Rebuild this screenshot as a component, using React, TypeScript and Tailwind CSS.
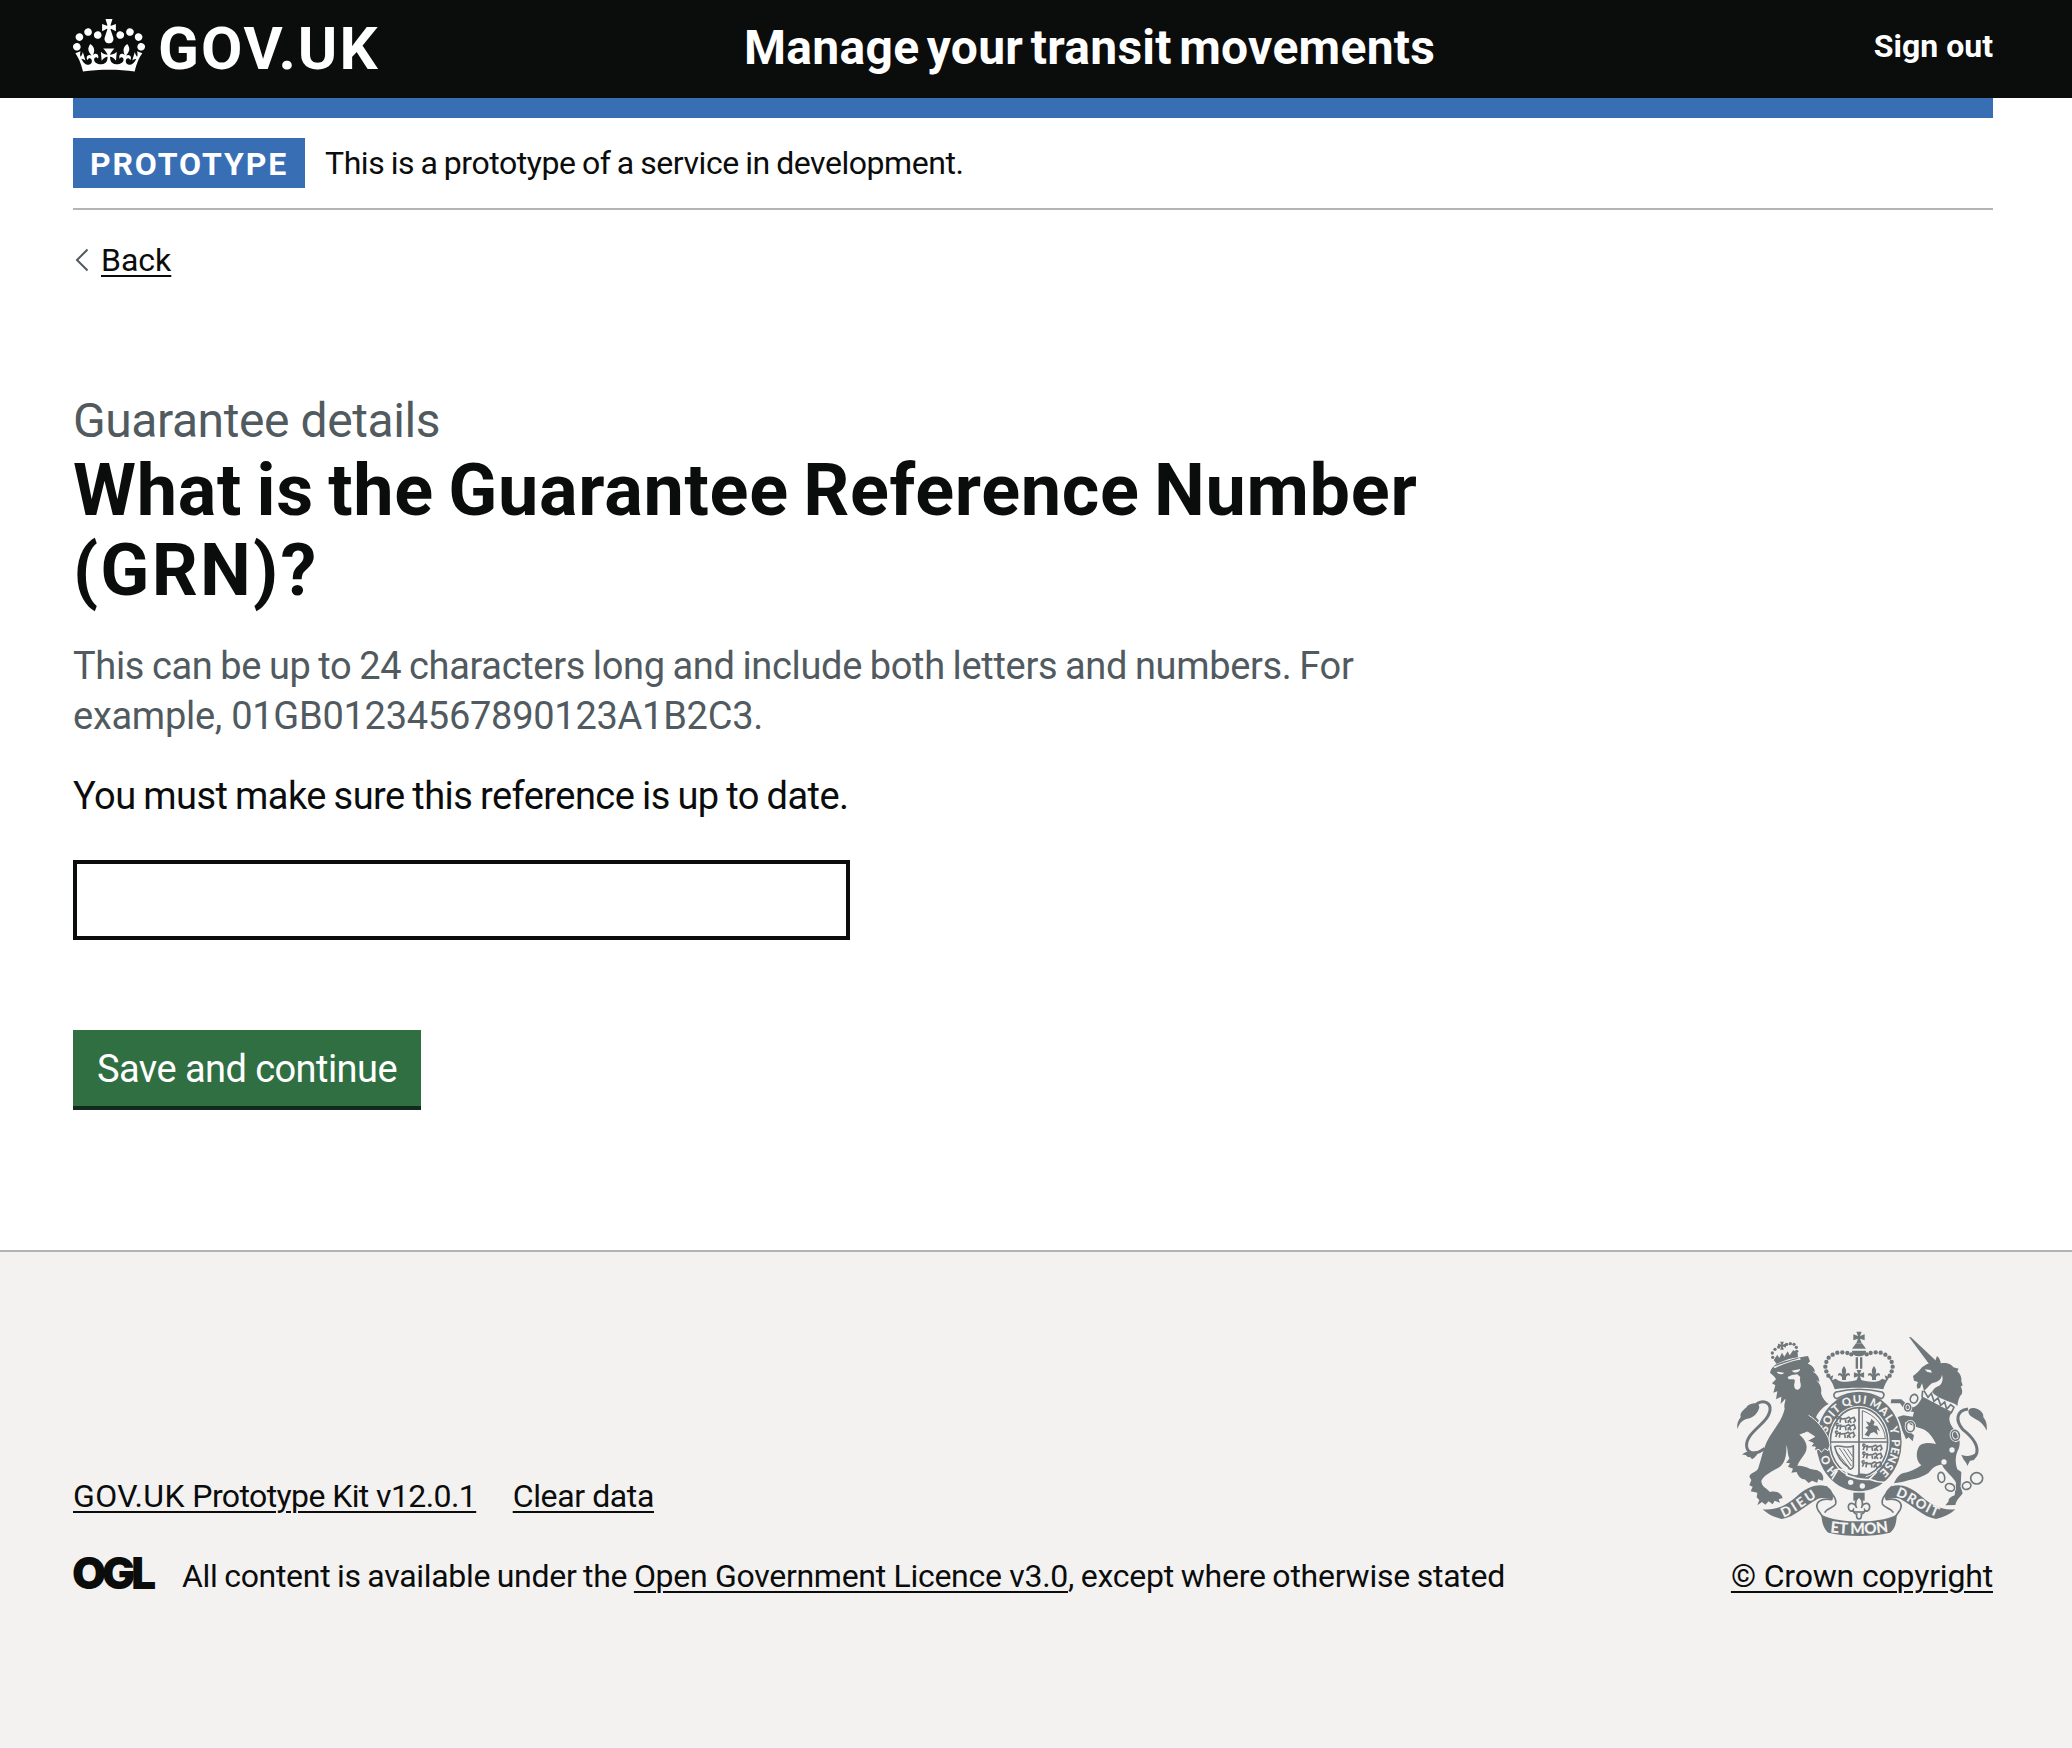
const GARTER_LETTERS: [string, number][] = [
  ["H", -133], ["O", -115],
  ["S", -72], ["O", -59], ["I", -48], ["T", -39],
  ["Q", -20], ["U", -3], ["I", 9],
  ["M", 27], ["A", 43], ["L", 56], ["Y", 74],
  ["P", 91], ["E", 102], ["N", 113], ["S", 125], ["E", 136],
];

const ARCH_PEARLS: [number, number][] = [
  [394, 103], [382, 99], [367, 97], [352, 98], [338, 104], [326, 113], [319, 126], [316, 140], [319, 154], [325, 167],
];

const LION_PEARLS: [number, number][] = [
  [157, 99], [158, 112], [165, 88], [176, 81], [200, 73], [211, 71], [222, 73], [229, 82], [230, 94],
];

const CHAIN_RINGS: [number, number, number, number, number][] = [
  [582, 236, 11, 13, 20], [563, 262, 9, 11, 0], [571, 320, 12, 15, 0], [706, 346, 12, 15, -15],
  [664, 472, 10, 15, -10], [690, 502, 14, 11, 20], [740, 497, 13, 11, -20], [770, 475, 18, 17, 0],
];

function CrownLogo() {
  return (
    <svg className="h-[53px] w-[72px] shrink-0" viewBox="0 0 132 97" fill="currentColor" aria-hidden="true">
      <path
        fillRule="evenodd"
        d="M25 30.2c3.5 1.5 7.7-.2 9.1-3.7 1.5-3.6-.2-7.8-3.9-9.2-3.6-1.4-7.6.3-9.1 3.9-1.4 3.5.3 7.5 3.9 9zM9 39.5c3.6 1.5 7.8-.2 9.2-3.7 1.5-3.6-.2-7.8-3.9-9.1-3.6-1.5-7.6.2-9.1 3.8-1.4 3.5.3 7.5 3.8 9zM4.4 57.2c3.5 1.5 7.7-.2 9.1-3.8 1.5-3.6-.2-7.7-3.9-9.1-3.5-1.5-7.6.3-9.1 3.8-1.4 3.5.3 7.6 3.9 9.1zm38.3-21.4c3.5 1.5 7.7-.2 9.1-3.8 1.5-3.6-.2-7.7-3.9-9.1-3.6-1.5-7.6.3-9.1 3.8-1.3 3.6.4 7.7 3.9 9.1zm64.4-5.6c-3.6 1.5-7.8-.2-9.1-3.7-1.5-3.6.2-7.8 3.8-9.2 3.6-1.4 7.7.3 9.2 3.9 1.3 3.5-.4 7.5-3.9 9zm15.9 9.3c-3.6 1.5-7.7-.2-9.1-3.7-1.5-3.6.2-7.8 3.7-9.1 3.6-1.5 7.7.2 9.2 3.8 1.5 3.5-.3 7.5-3.8 9zm4.7 17.7c-3.6 1.5-7.8-.2-9.2-3.8-1.5-3.6.2-7.7 3.9-9.1 3.6-1.5 7.7.3 9.2 3.8 1.3 3.5-.4 7.6-3.9 9.1zM89.3 35.8c-3.6 1.5-7.8-.2-9.2-3.8-1.4-3.6.2-7.7 3.9-9.1 3.6-1.5 7.7.3 9.2 3.8 1.4 3.6-.3 7.7-3.9 9.1zM69.7 17.7l8.9 4.7V9.3l-8.9 2.8c-.2-.3-.5-.6-.9-.9L72.4 0H59.6l3.5 11.2c-.3.3-.6.5-.9.9l-8.8-2.8v13.1l8.8-4.7c.3.3.6.7.9.9l-5 15.4v.1c-.2.8-.4 1.6-.4 2.4 0 4.1 3.1 7.5 7 8.1h.2c.3 0 .7.1 1 .1.4 0 .7 0 1-.1h.2c4-.6 7.1-4.1 7.1-8.1 0-.8-.1-1.7-.4-2.4V34l-5.1-15.4c.4-.2.7-.6 1-.9zM66 92.8c16.9 0 32.8 1.1 47.1 3.2 4-16.9 8.9-26.7 14-33.5l-9.6-3.4c1 4.9 1.1 7.2 0 10.2-1.5-1.4-3-4.3-4.2-8.7L108.6 76c2.8-2 5-3.2 7.5-3.3-4.4 9.4-10 11.9-13.6 11.2-4.3-.8-6.3-4.6-5.6-7.9 1-4.7 5.7-5.9 8-.5 4.3-8.7-3-11.4-7.6-8.8 7.1-7.2 7.9-13.5 2.1-21.1-8 6.1-8.1 12.3-4.5 20.8-4.7-5.4-12.1-2.5-9.5 6.2 3.4-5.2 7.9-2 7.2 3.1-.6 4.3-6.4 7.8-13.5 7.2-10.3-.9-10.9-8-11.2-13.8 2.5-.5 7.1 1.8 11 7.3L80.2 60c-4.1 4.4-8 5.3-12.3 5.4 1.4-4.4 8-11.6 8-11.6H55.5s6.4 7.2 7.9 11.6c-4.2-.1-8-1-12.3-5.4l1.4 16.4c3.9-5.5 8.5-7.7 10.9-7.3-.3 5.8-.9 12.8-11.1 13.8-7.2.6-12.9-2.9-13.5-7.2-.7-5 3.8-8.3 7.1-3.1 2.7-8.7-4.6-11.6-9.4-6.2 3.7-8.5 3.6-14.7-4.6-20.8-5.8 7.6-5 13.9 2.2 21.1-4.7-2.6-11.9.1-7.7 8.8 2.3-5.5 7.1-4.2 8.1.5.7 3.3-1.3 7.1-5.7 7.9-3.5.7-9-1.8-13.5-11.2 2.5.1 4.7 1.3 7.5 3.3l-4.7-15.4c-1.2 4.4-2.7 7.2-4.3 8.7-1.1-3-.9-5.3 0-10.2l-9.5 3.4c5 6.9 9.9 16.7 14 33.5 14.8-2.1 30.8-3.2 47.7-3.2z"
      />
    </svg>
  );
}

function Fleur({ x, y, s = 1 }: { x: number; y: number; s?: number }) {
  return (
    <path
      transform={`translate(${x} ${y}) scale(${s})`}
      d="M0-22C8-12 8-4 3 6C8-4 20-3 18 8C14 4 9 6 6 12L6 20H-6L-6 12C-9 6-14 4-18 8C-20-3-8-4-3 6C-8-4-8-12 0-22Z"
    />
  );
}

function Cross({ x, y, s = 1 }: { x: number; y: number; s?: number }) {
  return (
    <path
      transform={`translate(${x} ${y}) scale(${s})`}
      d="M-8-17H8L3-4L17-9V9L3 4L8 17H-8L-3 4L-17 9V-9L-3-4Z"
    />
  );
}

function WalkingLion({ x, y }: { x: number; y: number }) {
  return (
    <path
      transform={`translate(${x} ${y})`}
      fill="none"
      stroke="#6f777b"
      strokeWidth="5"
      d="M-33 6L-28-5L-20-6L-22 8M-20-3L-4-4L4-8L10-4L6 2L12 9M-6-2L-4 9M4 0L2 9M10-4L20-8L24 2L18 8M-31-4C-38-12-28-14-27-9"
    />
  );
}

function Scroll() {
  return (
    <>
      <path d="M128 568C175 572 205 552 238 522C265 499 296 491 318 499C336 507 341 522 338 540C318 532 298 533 288 540C262 552 224 592 186 597C164 592 146 585 128 568Z" />
      <path
        fill="none"
        stroke="#6f777b"
        strokeWidth="5"
        d="M336 539C302 532 284 548 293 568C298 578 306 584 312 598M318 499C334 522 352 534 347 552C342 564 322 562 314 578"
      />
    </>
  );
}

function RoyalArms() {
  return (
    <svg className="h-[208px] w-[252px]" viewBox="48 30 756 624" fill="#6f777b" role="img" aria-label="Royal coat of arms">
      {/* lion */}
      <path d="M166 134C190 124 235 112 264 108L270 124L263 131C276 135 284 144 285 156L277 154C291 163 298 172 298 186L289 180C302 194 306 206 303 220C308 236 316 246 326 252C306 262 294 278 288 292C306 312 322 336 328 360L324 392L312 386L305 397L297 388L284 392L287 380L274 381L280 370L268 362L286 350L263 334C258 336 248 340 238 344C256 358 266 378 256 398C246 414 236 424 232 438C252 434 268 450 290 450C306 456 314 470 308 482L294 478L292 488L276 482L266 489L254 478C242 478 234 468 230 456L214 458L219 446L204 440L210 430L198 428L208 416C202 402 204 388 199 374C200 400 198 426 178 442C156 454 132 466 124 482C124 500 140 504 150 516C168 512 184 518 188 534L176 538L180 548L164 542L158 553L146 544L136 554L126 546L112 556L118 540L110 532L112 518L92 514L98 500L88 496L94 480L88 470C92 456 108 458 114 446C124 418 128 392 140 366C158 330 186 304 194 266C190 254 198 244 196 236L182 252L184 230L168 238L172 214L160 218L166 196L156 190L168 178C166 170 158 166 150 158C152 148 158 140 166 134Z" />
      <path fill="none" stroke="#6f777b" strokeWidth="9" d="M134 385C110 404 84 404 80 380C76 350 112 326 132 304C152 282 158 256 138 247C124 242 110 250 100 262" />
      <path d="M52 328C50 312 54 302 62 292C58 274 74 270 82 258C96 246 118 246 118 262C114 280 100 294 82 296C68 300 58 308 52 328Z" />
      <path d="M66 404C76 396 84 392 96 396L118 392C112 404 106 412 96 418C92 412 90 410 84 412C80 404 74 404 66 404Z" />
      <g fill="#f3f2f1">
        <path d="M170 155L192 158C188 165 176 165 170 155Z" />
        <path d="M215 152L241 147C238 158 224 162 215 152Z" />
        <path d="M203 171L216 165L232 163L241 172C237 182 244 190 242 200C238 212 225 212 223 200C221 190 228 184 222 178L206 178Z" />
        <path d="M160 140C190 130 232 116 240 114L242 119C220 121 186 133 164 145Z" />
      </g>
      {/* lion's crown */}
      {LION_PEARLS.map(([x, y]) => (
        <circle key={`${x}-${y}`} cx={x} cy={y} r="5" />
      ))}
      <Cross x={186} y={77} s={0.7} />
      <path d="M161 120L172 104L178 114L186 98L193 110L203 94L209 106L220 90L233 100L234 112C214 114 190 122 170 132Z" />

      {/* unicorn */}
      <path d="M567 51L573 52L648 122L630 136Z" />
      <path d="M634 128L646 122L651 108C658 114 662 122 662 130C680 126 696 134 700 142L716 146L712 154C722 162 726 176 724 184L728 196L722 200C730 212 726 224 722 226C716 234 714 246 712 258C706 250 698 250 690 246C674 240 650 232 636 216C640 206 650 200 660 196C668 186 670 176 666 164C664 180 652 186 640 188C628 192 624 204 612 212L606 190L600 204L592 206L590 196L594 186L582 182L579 168C592 160 600 150 606 142C616 134 624 130 634 128Z" />
      <path fill="#f3f2f1" d="M614 148L632 150L636 158L622 156Z" />
      <path d="M606 232L694 280C682 296 690 314 704 330C716 350 724 366 716 386C704 408 706 430 712 448L724 456L722 500L728 520C720 532 710 538 706 555L676 556L686 544C684 536 694 530 704 526L708 488C700 470 676 456 666 434C652 434 640 440 626 458C602 476 570 478 546 486L522 490C528 478 534 466 548 460C570 456 590 446 604 436C588 424 586 396 598 378C610 366 628 368 648 372C638 350 626 334 606 326L580 318L556 306C554 326 570 336 582 346L578 364L566 352L558 358C552 344 548 332 540 322C532 316 524 308 524 294L550 286L578 290L582 276L556 272L540 250L512 250L514 238L544 238L562 254L580 262C592 258 600 246 606 232Z" />
      <path fill="none" stroke="#6f777b" strokeWidth="5" d="M608 212L606 232M612 212L624 232L634 220L642 244L654 234L662 256L674 246L680 268L692 254L702 262L694 278L606 232" />
      <path fill="none" stroke="#6f777b" strokeWidth="9" d="M744 267C708 272 706 302 728 328C756 350 776 376 770 400C764 418 746 420 732 414" />
      <path d="M800 332C802 312 798 302 790 292C792 278 780 268 762 264C744 262 740 276 752 288C766 298 788 304 800 332Z" />
      <path d="M724 404C734 408 744 410 754 406L774 398L762 420L750 422L742 438C740 426 732 424 724 404Z" />
      {CHAIN_RINGS.map(([x, y, rx, ry, r]) => (
        <g key={`${x}-${y}`} fill="none" transform={`rotate(${r} ${x} ${y})`}>
          <ellipse cx={x} cy={y} rx={rx} ry={ry} stroke="#f3f2f1" strokeWidth="10" />
          <ellipse cx={x} cy={y} rx={rx} ry={ry} stroke="#6f777b" strokeWidth="5" />
        </g>
      ))}
      <circle cx="696" cy="390" r="8" fill="#f3f2f1" />
      <circle cx="672" cy="426" r="8" fill="#f3f2f1" />

      {/* garter and shield */}
      <ellipse cx="417" cy="366" rx="133" ry="153" fill="#f3f2f1" />
      <path
        fillRule="evenodd"
        d="M289 366A128 148 0 1 1 545 366A128 148 0 1 1 289 366ZM325 366A92 109 0 1 0 509 366A92 109 0 1 0 325 366Z"
      />
      <ellipse cx="417" cy="366" rx="86" ry="103" fill="none" stroke="#6f777b" strokeWidth="5" />
      <path fill="none" stroke="#6f777b" strokeWidth="5" d="M417 262V470M330 366H504" />
      <g>
        <WalkingLion x={382} y={300} />
        <WalkingLion x={382} y={322} />
        <WalkingLion x={380} y={345} />
        <WalkingLion x={462} y={384} />
        <WalkingLion x={462} y={408} />
        <WalkingLion x={460} y={434} />
      </g>
      <path fill="none" stroke="#6f777b" strokeWidth="3" d="M427 272V356H496C494 322 468 286 427 272Z" />
      <path d="M434 344L444 330L436 322L446 318L438 304L450 308L454 296L464 306L460 316L472 318L480 334L470 328L474 346L462 336L452 340L446 350Z" />
      <path fill="none" stroke="#6f777b" strokeWidth="5" d="M344 380C360 372 376 388 400 378V440C394 452 386 448 384 440C364 428 350 404 344 380Z" />
      <path fill="none" stroke="#6f777b" strokeWidth="3" d="M358 384L394 438M370 386L396 424M382 386L398 410M350 396L388 444" />
      <path d="M406 470L417 460L440 462L436 474H400Z" />
      <path fill="none" stroke="#f3f2f1" strokeWidth="5" d="M336 478L352 452M340 452C362 442 384 452 380 466C400 474 426 480 448 478L470 456M448 478C468 486 484 488 500 486" />
      <circle cx="392" cy="487" r="8" fill="#f3f2f1" />
      <circle cx="427" cy="498" r="8" fill="#f3f2f1" />
      <g fill="#f3f2f1" fontFamily="Lato, sans-serif" fontWeight="900" fontSize="34" textAnchor="middle">
        {GARTER_LETTERS.map(([letter, angle]) => {
          const rad = (angle * Math.PI) / 180;
          const x = 417 + 110 * Math.sin(rad);
          const y = 366 - 128 * Math.cos(rad);
          return (
            <text key={angle} transform={`translate(${x} ${y}) rotate(${angle})`} y="12">
              {letter}
            </text>
          );
        })}
      </g>
      {/* lion's paw over the garter */}
      <path
        stroke="#f3f2f1"
        strokeWidth="3"
        d="M266 286C290 300 312 326 326 356L330 376L324 392L314 386L304 397L297 388L282 392L286 381L272 380L280 370L262 362L284 350L256 332Z"
      />
      <path d="M240 270L268 288L264 334L240 342Z" />

      {/* royal crown */}
      <Cross x={417} y={52} />
      <path d="M408 70H426L438 86H396Z" />
      <path d="M396 92H438C438 104 428 109 417 109C406 109 396 104 396 92Z" />
      <path d="M407 112H414V146H407ZM420 112H427V146H420Z" />
      {ARCH_PEARLS.map(([x, y]) => (
        <g key={`${x}-${y}`}>
          <circle cx={x} cy={y} r="6.5" />
          <circle cx={834 - x} cy={y} r="6.5" />
        </g>
      ))}
      <Cross x={417} y={165} s={0.9} />
      <Fleur x={372} y={160} />
      <Fleur x={462} y={160} />
      <path d="M326 172L340 166L336 180L348 176C360 190 396 186 417 178C438 186 474 190 486 176L498 180L494 166L508 172C500 184 494 194 490 208C450 202 384 202 344 208C340 194 334 184 326 172Z" />
      <path fill="#f3f2f1" stroke="#6f777b" strokeWidth="5" d="M348 216C390 206 444 206 486 216C496 222 492 232 484 236C440 212 394 212 350 236C340 232 338 222 348 216Z" />

      {/* pedestal badge */}
      <path d="M400 518H434V542H400Z" />
      <path
        fill="#f3f2f1"
        stroke="#6f777b"
        strokeWidth="5"
        d="M417 530C430 542 430 552 424 564C430 546 450 546 449 562C448 574 438 576 434 570C434 578 428 582 424 582C426 592 422 597 417 597C412 597 408 592 410 582C406 582 400 578 400 570C396 576 386 574 385 562C384 546 404 546 410 564C404 552 404 542 417 530Z"
      />
      <path fill="none" stroke="#6f777b" strokeWidth="5" d="M400 576H434" />

      {/* motto scroll */}
      <Scroll />
      <g transform="matrix(-1 0 0 1 834 0)">
        <Scroll />
      </g>
      <path d="M304 584C335 600 380 604 417 604C455 604 500 600 530 584C530 610 524 628 510 638C450 651 385 651 325 638C312 628 306 610 304 584Z" />
      <g fill="#f3f2f1" fontFamily="Lato, sans-serif" fontWeight="900">
        <path id="motto-left" fill="none" d="M190 592C222 582 262 547 304 524" />
        <path id="motto-right" fill="none" d="M526 527C566 540 600 574 660 594" />
        <path id="motto-base" fill="none" d="M326 636C380 644 454 644 512 634" />
        <text fontSize="40"><textPath href="#motto-left" textLength="118">DIEU</textPath></text>
        <text fontSize="40"><textPath href="#motto-right" textLength="140">DROIT</textPath></text>
        <text fontSize="46"><textPath href="#motto-base" startOffset="4" textLength="176">ET MON</textPath></text>
      </g>
    </svg>
  );
}

export default function App() {
  return (
    <div className="flex h-[1748px] w-[2072px] flex-col overflow-hidden bg-white font-[Roboto,sans-serif] text-[#0b0c0c]">
      <header className="h-[98px] bg-[#0b0c0c] pl-[73px] text-white">
        <div className="flex h-full w-[1920px] items-start">
          <a className="flex w-[671px] items-start">
            <span className="pt-[19px]"><CrownLogo /></span>
            <span className="ml-[13px] text-[60px] leading-[97px] font-bold tracking-[2px]">GOV.UK</span>
          </a>
          <a className="text-[48px] leading-[95px] font-bold tracking-[0.28px] whitespace-nowrap [word-spacing:-4.8px]">Manage your transit movements</a>
          <a className="ml-auto text-[32px] leading-[92px] font-bold">Sign out</a>
        </div>
      </header>

      <div className="ml-[73px] w-[1920px] border-t-[20px] border-[#386eb4]">
        <div className="flex h-[92px] items-center border-b-2 border-[#b3b4b6]">
          <strong className="flex h-[50px] w-[232px] items-center justify-center bg-[#386eb4] pt-0.5 text-[32px] leading-10 font-bold tracking-[1.9px] text-white">PROTOTYPE</strong>
          <span className="ml-5 text-[32px] leading-10 tracking-[-0.44px] [word-spacing:-1.1px]">This is a prototype of a service in development.</span>
        </div>

        <a className="mt-[30px] flex h-10 items-center">
          <svg className="ml-[2px] h-[24px] w-[14px]" viewBox="0 0 14 24" fill="none" stroke="#505a5f" strokeWidth="2">
            <path d="M12.5 1.5L2 12L12.5 22.5" />
          </svg>
          <span className="ml-3 text-[32px] leading-10 underline decoration-2 underline-offset-4">Back</span>
        </a>

        <main className="mt-[111px] w-[1400px]">
          <span className="block text-[48px] leading-[60px] tracking-[-0.42px] text-[#505a5f]">Guarantee details</span>
          <h1 className="text-[72px] leading-20 font-bold">
            <span className="tracking-[0.7px] whitespace-nowrap [word-spacing:-4.2px]">What is the Guarantee Reference Number</span>
            <br />
            <span className="tracking-[2.2px]">(GRN)?</span>
          </h1>
          <p className="mt-[30px] text-[38px] leading-[50px] text-[#505a5f]">
            <span className="tracking-[-0.33px] [word-spacing:-1.3px]">This can be up to 24 characters long and include both letters and numbers. For</span>
            <br />
            <span className="tracking-[-0.27px]">example, 01GB01234567890123A1B2C3.</span>
          </p>
          <p className="mt-[30px] text-[38px] leading-[50px] tracking-[-0.55px] [word-spacing:-1.2px]">You must make sure this reference is up to date.</p>
          <input className="mt-[39px] block h-20 w-[777px] border-4 border-[#0b0c0c] bg-white" />
          <button className="mt-[90px] block h-20 w-[348px] border-b-4 border-[#12291b] bg-[#2f6f42] pt-0.5 text-[38px] leading-[50px] tracking-[-0.56px] text-white">
            Save and continue
          </button>
        </main>
      </div>

      <footer className="mt-[140px] flex-1 border-t-2 border-[#b1b4b6] bg-[#f3f2f1] pt-[78px] pl-[73px] text-[32px] leading-10">
        <div className="flex w-[1920px] items-end justify-between">
          <div>
            <div className="flex gap-[36.5px]">
              <a className="tracking-[-0.6px] underline decoration-2 underline-offset-4"><span className="tracking-[0.4px]">GOV.UK</span> Prototype Kit v12.0.1</a>
              <a className="tracking-[-0.38px] underline decoration-2 underline-offset-4">Clear data</a>
            </div>
            <div className="mt-10 flex items-start">
              <span className="w-[109px] font-[Inter,sans-serif] text-[44px] leading-[34px] font-black tracking-[-4px] -indent-px">OGL</span>
              <span className="whitespace-pre">
                <span className="tracking-[-0.3px] [word-spacing:-1px]">All content is available under the </span>
                <a className="tracking-[-0.29px] underline decoration-2 underline-offset-4">Open Government Licence v3.0</a>
                <span className="tracking-[-0.24px] [word-spacing:-1px]">, except where otherwise stated</span>
              </span>
            </div>
          </div>
          <div className="flex flex-col items-center">
            <RoyalArms />
            <a className="mt-[18px] tracking-[-0.17px] underline decoration-2 underline-offset-4">© Crown copyright</a>
          </div>
        </div>
      </footer>
    </div>
  );
}
